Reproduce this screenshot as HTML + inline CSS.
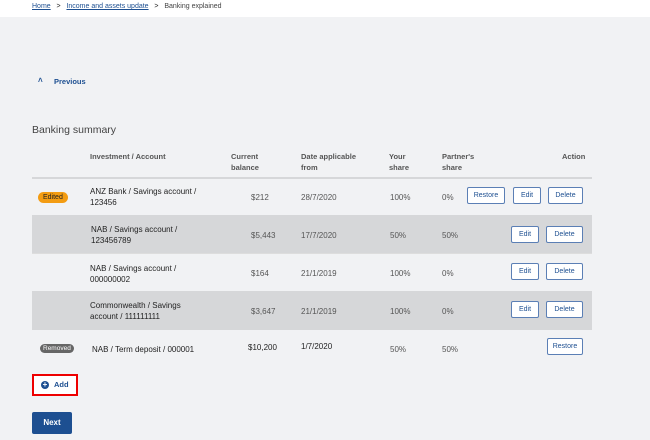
<!DOCTYPE html>
<html><head><style>
*{margin:0;padding:0;box-sizing:border-box}
body{width:650px;height:440px;background:#f1f2f4;font-family:"Liberation Sans",sans-serif;position:relative;overflow:hidden;color:#222}
.a{position:absolute;white-space:nowrap}
.top{position:absolute;left:0;top:0;width:650px;height:17px;background:#fff}
.bc{font-size:7px;top:3px}
.bc u{color:#1d4f91}
.t{font-size:8px;line-height:11px}
.g{color:#555}
.h{font-size:7.5px;font-weight:bold;color:#555;line-height:11px}
.row{position:absolute;left:32px;width:560px}
.btn{position:absolute;height:17px;border:1px solid #5b7fb5;border-radius:2px;background:#fff;color:#1d4f91;font-size:7px;text-align:center;line-height:15px}
.badge{position:absolute;font-size:7px;border-radius:7px;padding:0 5px;line-height:11px}
</style></head><body>
<div class="top"></div>
<div class="a bc" style="left:32px"><u>Home</u>&nbsp;&nbsp;&nbsp;&gt;&nbsp;&nbsp;&nbsp;<u>Income and assets update</u>&nbsp;&nbsp;&nbsp;&gt;&nbsp;&nbsp;&nbsp;<span style="color:#444">Banking explained</span></div>
<div class="a" style="left:38px;top:76px;font-size:8px;color:#1d4f91;font-weight:bold">&#708;</div>
<div class="a" style="left:54px;top:77px;font-size:7.5px;color:#1d4f91;font-weight:bold">Previous</div>
<div class="a" style="left:32px;top:124px;font-size:10.5px;color:#444">Banking summary</div>

<div class="a h" style="left:90px;top:151px">Investment / Account</div>
<div class="a h" style="left:231px;top:151px">Current<br>balance</div>
<div class="a h" style="left:301px;top:151px">Date applicable<br>from</div>
<div class="a h" style="left:389px;top:151px">Your<br>share</div>
<div class="a h" style="left:442px;top:151px">Partner's<br>share</div>
<div class="a h" style="left:562px;top:151px">Action</div>

<div class="row" style="top:177px;height:2px;background:#d6d7d9"></div>
<div class="row" style="top:215px;height:38px;background:#d6d7d9"></div>
<div class="row" style="top:291px;height:39px;background:#d6d7d9"></div>
<div class="row" style="top:253px;height:1px;background:#ddd"></div>

<div class="badge" style="left:38px;top:192px;background:#f39c12;color:#222">Edited</div>
<div class="a t" style="left:90px;top:186px">ANZ Bank / Savings account /<br>123456</div>
<div class="a t g" style="left:251px;top:192px">$212</div>
<div class="a t g" style="left:301px;top:192px">28/7/2020</div>
<div class="a t g" style="left:390px;top:192px">100%</div>
<div class="a t g" style="left:442px;top:192px">0%</div>
<div class="btn" style="left:467px;top:187px;width:38px">Restore</div>
<div class="btn" style="left:513px;top:187px;width:28px">Edit</div>
<div class="btn" style="left:548px;top:187px;width:35px">Delete</div>

<div class="a t" style="left:91px;top:224px">NAB / Savings account /<br>123456789</div>
<div class="a t g" style="left:251px;top:230px">$5,443</div>
<div class="a t g" style="left:301px;top:230px">17/7/2020</div>
<div class="a t g" style="left:390px;top:230px">50%</div>
<div class="a t g" style="left:442px;top:230px">50%</div>
<div class="btn" style="left:511px;top:226px;width:28px">Edit</div>
<div class="btn" style="left:546px;top:226px;width:37px">Delete</div>

<div class="a t" style="left:90px;top:263px">NAB / Savings account /<br>000000002</div>
<div class="a t g" style="left:251px;top:268px">$164</div>
<div class="a t g" style="left:301px;top:268px">21/1/2019</div>
<div class="a t g" style="left:390px;top:268px">100%</div>
<div class="a t g" style="left:442px;top:268px">0%</div>
<div class="btn" style="left:511px;top:263px;width:28px">Edit</div>
<div class="btn" style="left:546px;top:263px;width:37px">Delete</div>

<div class="a t" style="left:90px;top:300px">Commonwealth / Savings<br>account / 111111111</div>
<div class="a t g" style="left:251px;top:306px">$3,647</div>
<div class="a t g" style="left:301px;top:306px">21/1/2019</div>
<div class="a t g" style="left:390px;top:306px">100%</div>
<div class="a t g" style="left:442px;top:306px">0%</div>
<div class="btn" style="left:511px;top:301px;width:28px">Edit</div>
<div class="btn" style="left:546px;top:301px;width:37px">Delete</div>

<div class="badge" style="left:40px;top:344px;background:#666;color:#fff;font-size:6.5px;line-height:9px;padding:0 3px">Removed</div>
<div class="a t" style="left:92px;top:344px">NAB / Term deposit / 000001</div>
<div class="a t" style="left:248px;top:342px">$10,200</div>
<div class="a t" style="left:301px;top:341px">1/7/2020</div>
<div class="a t g" style="left:390px;top:344px">50%</div>
<div class="a t g" style="left:442px;top:344px">50%</div>
<div class="btn" style="left:547px;top:338px;width:36px">Restore</div>

<div class="a" style="left:32px;top:374px;width:46px;height:22px;border:2px solid #e00;background:#fff"></div>
<div class="a" style="left:41px;top:381px;width:8px;height:8px;border-radius:50%;background:#1d4f91;color:#fff;font-size:8px;line-height:8px;text-align:center;font-weight:bold">+</div>
<div class="a" style="left:54px;top:380px;font-size:7.5px;font-weight:bold;color:#1d4f91">Add</div>

<div class="a" style="left:32px;top:412px;width:40px;height:22px;background:#1d4f91;border-radius:2px;color:#fff;font-size:8px;font-weight:bold;text-align:center;line-height:22px">Next</div>
</body></html>
